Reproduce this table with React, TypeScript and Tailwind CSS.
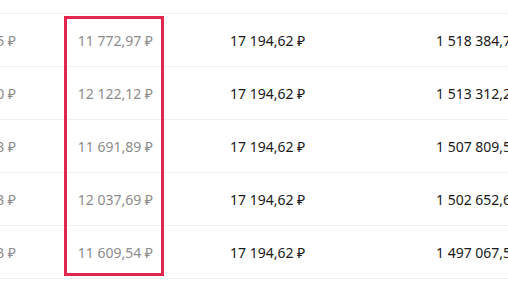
const rows = [
  { prev: "5 745,65 ₽", interest: "11 772,97 ₽", payment: "17 194,62 ₽", balance: "1 518 384,72 ₽" },
  { prev: "5 421,50 ₽", interest: "12 122,12 ₽", payment: "17 194,62 ₽", balance: "1 513 312,27 ₽" },
  { prev: "5 072,33 ₽", interest: "11 691,89 ₽", payment: "17 194,62 ₽", balance: "1 507 809,54 ₽" },
  { prev: "5 502,73 ₽", interest: "12 037,69 ₽", payment: "17 194,62 ₽", balance: "1 502 652,61 ₽" },
  { prev: "5 156,93 ₽", interest: "11 609,54 ₽", payment: "17 194,62 ₽", balance: "1 497 067,53 ₽" },
];

const App = () => {
  return (
    <div
      className="relative w-[508px] h-[285px] overflow-hidden bg-white text-[14px]"
      style={{ fontFamily: "'Noto Sans', 'Open Sans', sans-serif" }}
    >
      <div className="h-[13px]" />
      <div className="border-b border-[#efefef]">
        {rows.map((row, index) => (
          <div key={index} className="flex h-[53px] items-center border-t border-[#efefef]">
            <div className="flex w-[64px] shrink-0 justify-end whitespace-nowrap pr-[48px] text-[#8c8c8c]">
              {row.prev}
            </div>
            <div className="flex w-[100px] shrink-0 justify-end whitespace-nowrap pr-[11px] text-[#8c8c8c]">
              {row.interest}
            </div>
            <div className="w-[150px] shrink-0 whitespace-nowrap pl-[66px] text-[#1a1a1a]">
              {row.payment}
            </div>
            <div className="w-[230px] shrink-0 whitespace-nowrap pl-[122px] text-[#1a1a1a]">
              {row.balance}
            </div>
          </div>
        ))}
      </div>
      <div className="absolute left-[64px] top-[16px] h-[260px] w-[100px] border-[3px] border-[#e3264e]" />
    </div>
  );
};

export default App;
